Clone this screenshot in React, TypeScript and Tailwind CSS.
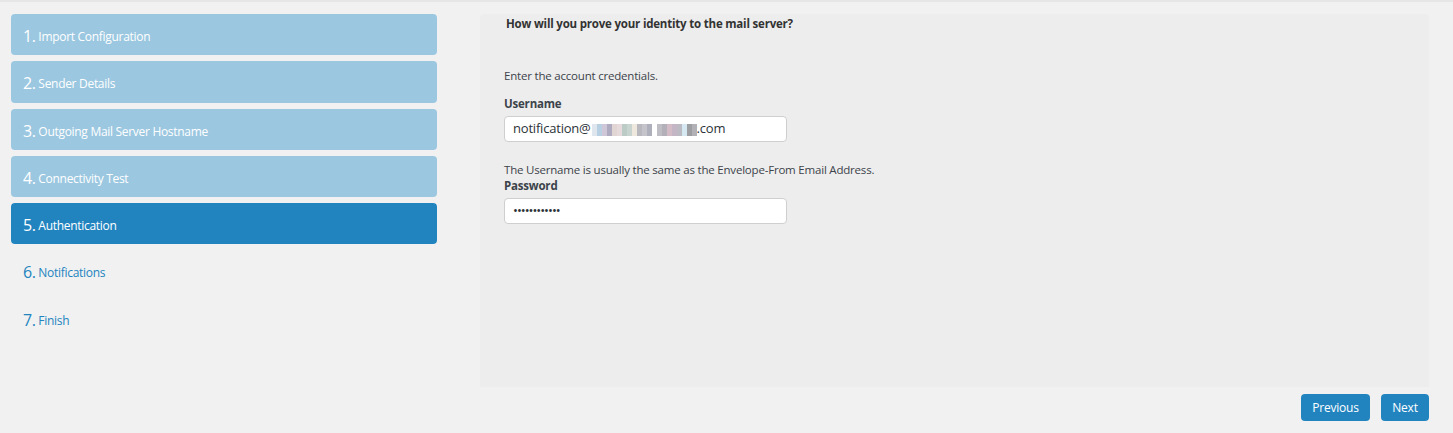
import React from 'react';

const steps = [
  { n: 1, label: 'Import Configuration', state: 'done' },
  { n: 2, label: 'Sender Details', state: 'done' },
  { n: 3, label: 'Outgoing Mail Server Hostname', state: 'done' },
  { n: 4, label: 'Connectivity Test', state: 'done' },
  { n: 5, label: 'Authentication', state: 'active' },
  { n: 6, label: 'Notifications', state: 'todo' },
  { n: 7, label: 'Finish', state: 'todo' },
];

// pixelated (redacted) part of the email address
const blur = [
  '#dfe6ee', '#b8d0e2', '#cfc6d8', '#aeaabf', '#e2d6d4', '#e6dadc', '#bccbc6', '#c8d4d0', '#efe8de',
  '#b8b8be', '#c4c4ca', '#aeb0bc', '#ffffff', '#bebec4', '#b4b0ba', '#d4bcc6', '#c4b6c4', '#bcbac2',
  '#d6e8f2', '#9c9ea2', '#b2b2b6',
];

export default function App() {
  return (
    <div
      className="w-[1453px] h-[433px] bg-[#f1f1f1] border-t-2 border-[#e6e6e6] text-[12px] text-[#3c434a]"
      style={{ fontFamily: '"Open Sans", "Noto Sans", sans-serif' }}
    >
      <div className="flex pt-[12px] pr-[24px] pl-[11px]">
        {/* Steps */}
        <nav className="w-[426px] flex flex-col gap-[6px] shrink-0">
          {steps.map((s) => {
            const cls =
              s.state === 'active'
                ? 'bg-[#2284bf] text-white'
                : s.state === 'done'
                ? 'bg-[#9bc7e0] text-white'
                : 'text-[#2284bf]';
            return (
              <div
                key={s.n}
                className={`h-[41.25px] rounded-[4px] px-[12px] pt-[3px] flex items-center ${cls}`}
              >
                <span className="text-[16px] tracking-[-0.5px] mr-[3px] leading-none">{s.n}.</span>
                <span className="text-[12px] tracking-[-0.3px] leading-none mt-[2px]">{s.label}</span>
              </div>
            );
          })}
        </nav>

        {/* Content + buttons */}
        <div className="ml-[43px] flex-1 flex flex-col">
          <section className="h-[373px] bg-[#ededed] rounded-t-[4px] px-[24px] pt-[1px]">
            <h2 className="font-bold text-[11.5px] text-[#333] pl-[2px] tracking-[-0.2px]">
              How will you prove your identity to the mail server?
            </h2>
            <p className="mt-[35px] text-[11.5px] tracking-[-0.2px]">Enter the account credentials.</p>
            <label className="block mt-[10px] font-bold text-[11.5px] tracking-[-0.2px]">Username</label>
            <div className="mt-[4px] w-[283px] h-[26px] bg-white border border-[#cfcfcf] rounded-[4px] px-[8px] flex items-center text-[13px] text-[#2c3338] tracking-[-0.2px]">
              <span>notification@</span>
              <span className="flex h-[12px] mt-[2px] ml-[1px]">
                {blur.map((c, i) => (
                  <span key={i} className="w-[5px] h-full" style={{ backgroundColor: c }} />
                ))}
              </span>
              <span>.com</span>
            </div>
            <p className="mt-[20px] text-[11.5px] tracking-[-0.2px] leading-[16px]">
              The Username is usually the same as the Envelope-From Email Address.
            </p>
            <label className="block font-bold text-[11.5px] tracking-[-0.2px] leading-[16px]">Password</label>
            <div className="mt-[4px] w-[283px] h-[26px] bg-white border border-[#cfcfcf] rounded-[4px] px-[8px] flex items-center text-[13px] text-[#2c3338]">
              <span className="tracking-[-1px]">••••••••••••</span>
            </div>
          </section>
          <div className="flex justify-end gap-[11px] mt-[7px]">
            <button className="w-[69px] h-[27px] rounded-[4px] bg-[#2284bf] text-white text-[12px] tracking-[-0.2px]">
              Previous
            </button>
            <button className="w-[48px] h-[27px] rounded-[4px] bg-[#2284bf] text-white text-[12px] tracking-[-0.2px]">
              Next
            </button>
          </div>
        </div>
      </div>
    </div>
  );
}
